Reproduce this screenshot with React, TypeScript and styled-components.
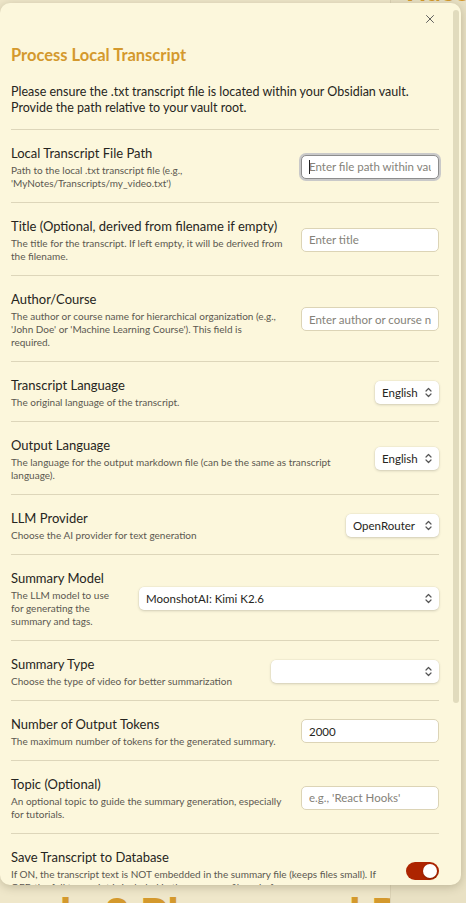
import styled, { createGlobalStyle } from "styled-components";
import { X } from "lucide-react";

const accent = "#d4992d";
const textNormal = "#262521";
const textMuted = "#5b5850";
const divider = "#ddd6ba";

const GlobalStyle = createGlobalStyle`
  html, body {
    margin: 0;
    padding: 0;
  }
  body {
    font-family: "Lato", "Noto Sans", sans-serif;
    background: #efe7ca;
    color: ${textNormal};
  }
  * {
    box-sizing: border-box;
  }
`;

const Page = styled.div`
  position: relative;
  width: 466px;
  height: 903px;
  overflow: hidden;
  display: flex;
`;

const DocPane = styled.div`
  width: 390px;
  display: flex;
  flex-direction: column;
  justify-content: flex-end;
  padding-left: 60px;
  background: #efe7ca;
`;

const SidePane = styled.div`
  flex: 1;
  background: #e9e1c4;
  border-left: 1px solid #dcd3b6;
  display: flex;
  flex-direction: column;
  padding-left: 10px;
`;

const EdgeStrip = styled.div`
  width: 4px;
  background: #c9c0a6;
  border-left: 1px solid #ece6d4;
`;

const BgHeading = styled.div`
  font-weight: 900;
  font-size: 44px;
  line-height: 46px;
  color: ${accent};
  white-space: nowrap;
  margin-bottom: -33px;
`;

const BgTopWord = styled.div`
  font-weight: 900;
  font-size: 26px;
  line-height: 26px;
  color: ${accent};
  margin-top: -22px;
`;

const Modal = styled.div`
  position: absolute;
  top: 3px;
  left: 0;
  width: 461px;
  height: 882px;
  background: #fcf7dc;
  border-radius: 10px;
  box-shadow: 0 2px 10px rgba(60, 50, 20, 0.25);
  overflow: hidden;
`;

const CloseButton = styled.button`
  position: absolute;
  top: 8px;
  right: 23px;
  width: 16px;
  height: 16px;
  padding: 0;
  border: none;
  background: none;
  color: #555;
  display: flex;
  align-items: center;
  justify-content: center;
`;

const ScrollThumb = styled.div`
  position: absolute;
  top: 7px;
  right: 2px;
  width: 6px;
  height: 693px;
  border-radius: 3px;
  background: #e1dbbd;
`;

const ModalBody = styled.div`
  height: 100%;
  overflow: hidden;
  padding: 41px 22px 0 11px;
`;

const Title = styled.h2`
  margin: 0 0 18px;
  font-size: 16.5px;
  line-height: 22px;
  font-weight: 700;
  color: ${accent};
`;

const Intro = styled.p`
  margin: 0 0 13px;
  font-size: 12.5px;
  line-height: 16px;
`;

const SettingItem = styled.div`
  display: flex;
  align-items: center;
  border-top: 1px solid ${divider};
  padding: 13px 0 12px;
`;

const SettingInfo = styled.div`
  flex: 1 1 auto;
  min-width: 0;
  margin-right: 16px;
`;

const SettingName = styled.div`
  font-size: 13px;
  line-height: 20px;
  color: ${textNormal};
`;

const SettingDesc = styled.div<{ $maxWidth?: number }>`
  margin-top: 1px;
  max-width: ${(p) => (p.$maxWidth ? `${p.$maxWidth}px` : "none")};
  font-size: 10px;
  line-height: 13px;
  color: ${textMuted};
`;

const SettingControl = styled.div<{ $width: number }>`
  flex: none;
  width: ${(p) => p.$width}px;
  display: flex;
  justify-content: flex-end;
  position: relative;
`;

const TextInput = styled.input<{ $focused?: boolean }>`
  width: 100%;
  height: 24px;
  padding: 0 7px;
  font-family: inherit;
  font-size: 11.5px;
  color: ${textNormal};
  background: #fff;
  border: 1px solid ${(p) => (p.$focused ? "#8d8d8d" : "#dcd4b6")};
  border-radius: 5px;
  outline: none;
  box-shadow: ${(p) => (p.$focused ? "0 0 0 2px #c9c9c9" : "none")};

  &::placeholder {
    color: #858279;
  }
`;

const Caret = styled.span`
  position: absolute;
  left: 8px;
  top: 5px;
  width: 1px;
  height: 14px;
  background: #222;
`;

const Select = styled.select`
  width: 100%;
  height: 23px;
  padding: 0 16px 0 7px;
  font-family: inherit;
  font-size: 11.5px;
  color: ${textNormal};
  background: #fff;
  border: none;
  border-radius: 5px;
  box-shadow: 0 1px 3px rgba(0, 0, 0, 0.16), 0 0 0 0.5px rgba(0, 0, 0, 0.05);
  appearance: none;
  outline: none;
`;

const Chevron = styled.svg`
  position: absolute;
  right: 6px;
  top: 6px;
  pointer-events: none;
`;

const Toggle = styled.div<{ $on: boolean }>`
  width: 33px;
  height: 18px;
  border-radius: 9px;
  background: ${(p) => (p.$on ? "#ad2400" : "#d9d2b6")};
  display: flex;
  align-items: center;
  justify-content: ${(p) => (p.$on ? "flex-end" : "flex-start")};
  padding: 0 2px;
`;

const Knob = styled.div`
  width: 14px;
  height: 14px;
  border-radius: 50%;
  background: #fff;
  box-shadow: 0 1px 2px rgba(0, 0, 0, 0.25);
`;

const ButtonRow = styled.div`
  display: flex;
  justify-content: flex-end;
  border-top: 1px solid ${divider};
  padding: 16px 0 150px;
`;

const PrimaryButton = styled.button`
  height: 28px;
  padding: 0 14px;
  font-family: inherit;
  font-size: 12px;
  color: #fff;
  background: #b5442a;
  border: none;
  border-radius: 5px;
`;

type SettingProps = {
  name: string;
  desc: string;
  width: number;
  descWidth?: number;
  children: React.ReactNode;
};

const Setting = ({ name, desc, width, descWidth, children }: SettingProps) => (
  <SettingItem>
    <SettingInfo>
      <SettingName>{name}</SettingName>
      <SettingDesc $maxWidth={descWidth}>{desc}</SettingDesc>
    </SettingInfo>
    <SettingControl $width={width}>{children}</SettingControl>
  </SettingItem>
);

const Dropdown = ({ value, options }: { value: string; options: string[] }) => (
  <>
    <Select defaultValue={value}>
      {options.map((o) => (
        <option key={o} value={o}>
          {o}
        </option>
      ))}
    </Select>
    <Chevron width="9" height="11" viewBox="0 0 9 11" fill="none">
      <path
        d="M2 4 L4.5 1.5 L7 4 M2 7 L4.5 9.5 L7 7"
        stroke="#555"
        strokeWidth="1.2"
        strokeLinecap="round"
        strokeLinejoin="round"
      />
    </Chevron>
  </>
);

export default function App() {
  return (
    <>
      <GlobalStyle />
      <Page>
        <DocPane>
          <BgHeading>ly 3 Phases and Beyond</BgHeading>
        </DocPane>
        <SidePane>
          <BgTopWord>Video</BgTopWord>
        </SidePane>
        <EdgeStrip />

        <Modal>
          <CloseButton aria-label="Close">
            <X size={14} strokeWidth={1.6} />
          </CloseButton>
          <ScrollThumb />
          <ModalBody>
            <Title>Process Local Transcript</Title>
            <Intro>
              Please ensure the .txt transcript file is located within your Obsidian vault.
              Provide the path relative to your vault root.
            </Intro>

            <Setting
              name="Local Transcript File Path"
              desc="Path to the local .txt transcript file (e.g., 'MyNotes/Transcripts/my_video.txt')"
              width={138}
            >
              <TextInput $focused placeholder="Enter file path within vault" />
              <Caret />
            </Setting>

            <Setting
              name="Title (Optional, derived from filename if empty)"
              desc="The title for the transcript. If left empty, it will be derived from the filename."
              width={138}
            >
              <TextInput placeholder="Enter title" />
            </Setting>

            <Setting
              name="Author/Course"
              desc="The author or course name for hierarchical organization (e.g., 'John Doe' or 'Machine Learning Course'). This field is required."
              width={138}
              descWidth={272}
            >
              <TextInput placeholder="Enter author or course name" />
            </Setting>

            <Setting
              name="Transcript Language"
              desc="The original language of the transcript."
              width={64}
            >
              <Dropdown value="English" options={["English", "Spanish", "French"]} />
            </Setting>

            <Setting
              name="Output Language"
              desc="The language for the output markdown file (can be the same as transcript language)."
              width={64}
            >
              <Dropdown value="English" options={["English", "Spanish", "French"]} />
            </Setting>

            <Setting
              name="LLM Provider"
              desc="Choose the AI provider for text generation"
              width={93}
            >
              <Dropdown value="OpenRouter" options={["OpenRouter", "OpenAI", "Gemini"]} />
            </Setting>

            <Setting
              name="Summary Model"
              desc="The LLM model to use for generating the summary and tags."
              width={300}
            >
              <Dropdown value="MoonshotAI: Kimi K2.6" options={["MoonshotAI: Kimi K2.6"]} />
            </Setting>

            <Setting
              name="Summary Type"
              desc="Choose the type of video for better summarization"
              width={168}
            >
              <Dropdown value="" options={[""]} />
            </Setting>

            <Setting
              name="Number of Output Tokens"
              desc="The maximum number of tokens for the generated summary."
              width={138}
            >
              <TextInput defaultValue="2000" />
            </Setting>

            <Setting
              name="Topic (Optional)"
              desc="An optional topic to guide the summary generation, especially for tutorials."
              width={138}
            >
              <TextInput placeholder="e.g., 'React Hooks'" />
            </Setting>

            <Setting
              name="Save Transcript to Database"
              desc="If ON, the transcript text is NOT embedded in the summary file (keeps files small). If OFF, the full transcript is included in the summary file as before."
              width={33}
            >
              <Toggle $on>
                <Knob />
              </Toggle>
            </Setting>

            <ButtonRow>
              <PrimaryButton>Process Transcript</PrimaryButton>
            </ButtonRow>
          </ModalBody>
        </Modal>
      </Page>
    </>
  );
}
